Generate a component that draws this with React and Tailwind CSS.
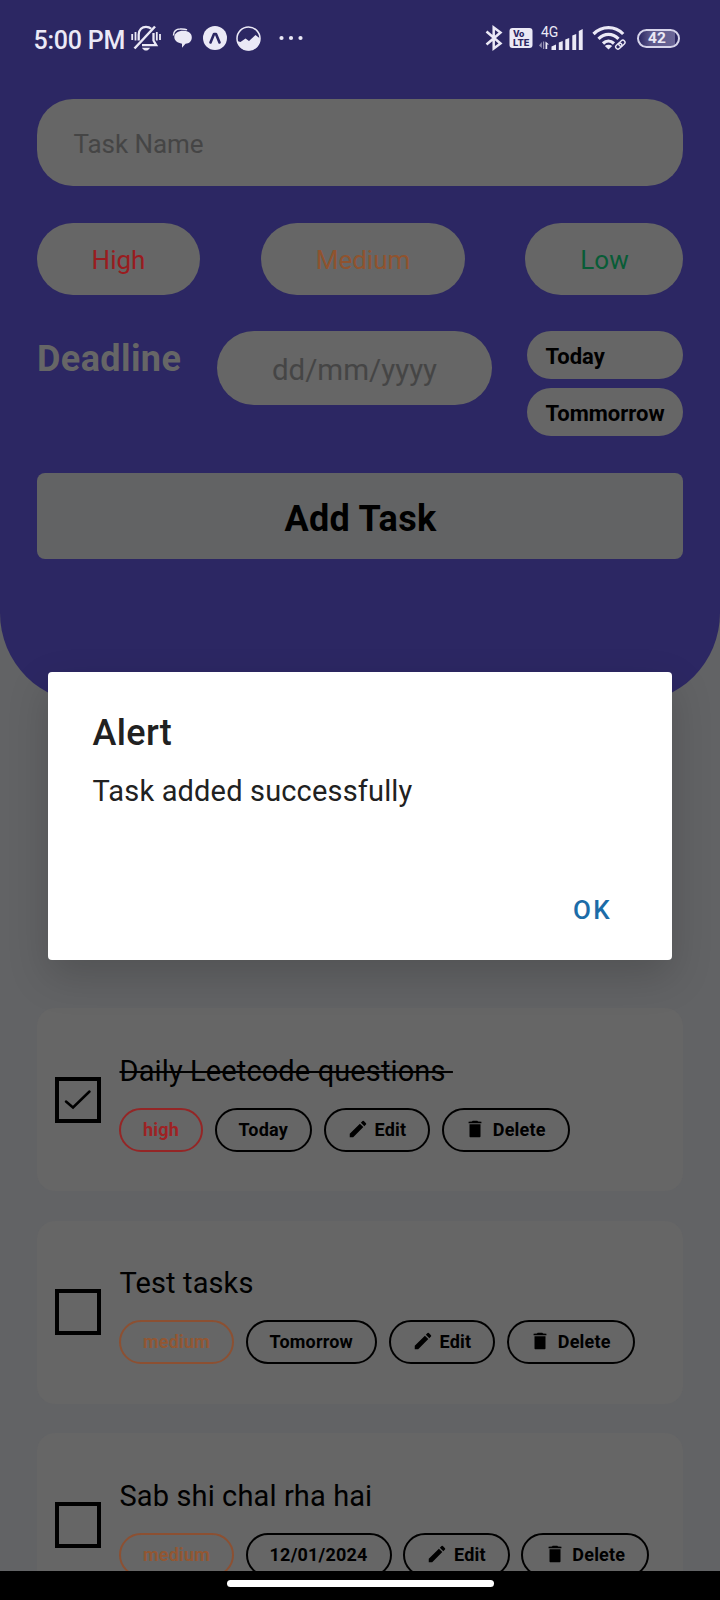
import React from "react";

const TASKS = [
  { title: "Daily Leetcode questions ", done: true, priority: "high", due: "Today" },
  { title: "Test tasks", done: false, priority: "medium", due: "Tomorrow" },
  { title: "Sab shi chal rha hai", done: false, priority: "medium", due: "12/01/2024" },
];

const PILL =
  "flex h-[44px] items-center rounded-full border-2 px-[22px] text-[18px] leading-none font-bold tracking-[0.2px] whitespace-pre";

function BellOff() {
  return (
    <svg className="ml-[6px] h-[26px] w-[30px] shrink-0" viewBox="0 0 30 26" fill="none" stroke="currentColor">
      <path d="M3.500 23.500 24 1.500" strokeWidth="2.500" />
      <path d="M7.700 15.500V9.500C8 4.800 11 1.800 15 1.800c2.300 0 4 .8 5.200 2" strokeWidth="2.300" />
      <path d="M22.500 8v7.500l2.700 4.700H11" strokeWidth="2.300" />
      <path d="M11 22.700h8c-1 1.900-2.300 2.800-4 2.800s-3-.9-4-2.800z" fill="currentColor" stroke="none" />
      <path d="M1.200 9v6M4.500 7v8.500M25.800 7v8.500M29 9v6" strokeWidth="1.800" />
    </svg>
  );
}

function Chat() {
  return (
    <svg className="ml-[11px] h-[20px] w-[21px] shrink-0" viewBox="0 0 21 20">
      <path d="M1.500 7.500C1.300 3 4.500 1 8 1c3.500-.1 5.500 0 7 .8" fill="none" stroke="currentColor" strokeWidth="1.500" />
      <path d="M11.300 2.700c5 0 8.500 2.600 8.500 6.500s-2.600 6.400-6.300 6.500L10 19.700v-4c-4.300-.6-7.700-3-7.700-6.600 0-3.800 3.900-6.400 9-6.400z" fill="currentColor" />
    </svg>
  );
}

function StatusBar() {
  return (
    <div className="flex h-[76px] items-center pl-[33.500px] text-[#ebe9f6]">
      <span className="w-[91.500px] shrink-0 translate-y-[1.500px] text-[25px] leading-none font-medium whitespace-nowrap tracking-[-0.25px]">5:00 PM</span>
      <BellOff />
      <Chat />
      <svg className="ml-[10px] size-[24px] shrink-0" viewBox="0 0 24 24">
        <circle cx="12" cy="12" r="12" fill="currentColor" />
        <path d="M7.500 16.500 11 8h2l3.500 8.500" fill="none" stroke="#2c2763" strokeWidth="2.600" strokeLinecap="round" strokeLinejoin="round" />
      </svg>
      <svg className="ml-[9px] size-[25px] shrink-0" viewBox="0 0 25 25">
        <circle cx="12.500" cy="12.500" r="11.500" fill="none" stroke="currentColor" strokeWidth="1.500" />
        <path d="M1 15 4.500 16 9.500 12.500 13 15 19.500 9 24 12.500a11.600 11.600 0 0 1-23 2.500z" fill="currentColor" />
      </svg>
      <svg className="ml-[18px] h-[6px] w-[24px] shrink-0" viewBox="0 0 24 6" fill="currentColor">
        <circle cx="2.500" cy="3" r="2.100" />
        <circle cx="12" cy="3" r="2.100" />
        <circle cx="21.500" cy="3" r="2.100" />
      </svg>

      <svg className="ml-[182px] h-[26px] w-[18px] shrink-0" viewBox="0 0 18 26" fill="none" stroke="currentColor" strokeWidth="2.500">
        <path d="M1.500 6.500 15.500 18.500 8.700 23.500V2.500L15.500 7.500 1.500 19.500" />
      </svg>
      <svg className="ml-[6px] h-[20px] w-[24px] shrink-0" viewBox="0 0 24 20">
        <rect x=".5" y="0" width="23" height="20" rx="3" fill="currentColor" />
        <g fill="#2c2763" fontFamily="Inter" fontWeight="800">
          <text x="4" y="9" fontSize="8.500" textLength="11.500" lengthAdjust="spacingAndGlyphs">Vo</text>
          <text x="4" y="17.500" fontSize="8.500" textLength="16.500" lengthAdjust="spacingAndGlyphs">LTE</text>
        </g>
      </svg>
      <svg className="ml-[5px] h-[34px] w-[46px] shrink-0 overflow-visible" viewBox="0 0 46 34" fill="currentColor">
        <text x="3" y="15.500" fontFamily="Roboto" fontSize="14">4G</text>
        <g transform="translate(0 5)">
          <path d="M1 19.500 3.800 16v6zM5 15.500h1.200V23H5z" opacity=".55" />
          <path d="M7.500 15.500 11 18.500H9.200V23H7.500z" />
          <path d="M13.500 20.500 18 18.500V24h-4.500zM20.800 16.500 24.700 15v9h-3.900zM27.300 13.500 31.200 12v12h-3.900zM34.300 9.500 38.200 8v16h-3.900zM40.800 5l3.900-2v21h-3.900z" />
        </g>
      </svg>
      <svg className="ml-[8px] h-[24px] w-[35px] shrink-0" viewBox="0 0 35 24" fill="none" stroke="currentColor">
        <path d="M1.500 8C10-.5 23-.5 31.200 8M6.500 12.800c6-5.800 14-5.800 20 0M11 17.500c3.300-3.300 7.500-3.300 11 0" strokeWidth="3.200" />
        <path d="M16.500 23.500 12.800 20c2.200-1.800 5.200-1.800 7.400 0z" fill="currentColor" stroke="none" />
        <g strokeWidth="1.400" transform="rotate(-42 28.500 18.500)">
          <rect x="22.800" y="16.300" width="6.800" height="4.400" rx="2.200" />
          <rect x="27" y="16.300" width="6.800" height="4.400" rx="2.200" />
        </g>
      </svg>
      <div className="ml-[10px] flex h-[19px] w-[43px] shrink-0 items-center rounded-full border-2 border-[#d6d4ea] bg-[linear-gradient(90deg,#2c2763_0%,#5d588b_30%,#6a6596_92%,#2c2763_93%)] pl-[9px] text-[15.500px] leading-none font-bold">
        <span className="translate-y-px">42</span>
      </div>
    </div>
  );
}

function TaskCard({ task }) {
  const color = task.priority === "high" ? "border-[#942626] text-[#9e2224]" : "border-[#8c5032] text-[#925733]";
  return (
    <div className="flex h-[183px] shrink-0 items-center rounded-[18px] bg-[#666666] pl-[18px]">
      <div className="flex size-[46px] shrink-0 items-center justify-center border-4 border-black">
        {task.done && (
          <svg className="size-[30px]" viewBox="0 0 30 30" fill="none" stroke="#000" strokeWidth="2.500" strokeLinecap="round" strokeLinejoin="miter">
            <path d="M3 16.500 10 22.500 26.500 6.500" />
          </svg>
        )}
      </div>
      <div className="ml-[18px] flex flex-col pt-[4px]">
        <div className={"ml-[0.500px] h-[38px] text-[29px] leading-[38px] tracking-[0.120px] whitespace-pre text-black " + (task.done ? "line-through decoration-2" : "")}>
          {task.title}
        </div>
        <div className="mt-[18px] flex gap-[11.500px]">
          <span className={PILL + " " + color}>{task.priority}</span>
          <span className={PILL + " border-black text-black"}>{task.due}</span>
          <span className={PILL + " border-black text-black"}>
            <svg className="mr-[6px] -ml-px size-[22px] -translate-y-px" viewBox="0 0 24 24">
              <path d="M3 17.250V21h3.750L17.810 9.940l-3.750-3.750L3 17.250zM20.710 7.040a1 1 0 0 0 0-1.410l-2.340-2.340a1 1 0 0 0-1.410 0l-1.830 1.830 3.750 3.750 1.830-1.830z" />
            </svg>
            Edit
          </span>
          <span className={PILL + " border-black text-black"}>
            <svg className="mr-[6.500px] ml-[-1.500px] size-[22px] -translate-y-px" viewBox="0 0 24 24">
              <path d="M6 19.800c0 .7.500 1.200 1.200 1.200h9.600c.7 0 1.200-.5 1.200-1.200V6.800H6v13zM19 4.200l-3.700-.4L14.500 3h-5l-.8.800L5 4.200V5.800h14V4.200z" />
            </svg>
            Delete
          </span>
        </div>
      </div>
    </div>
  );
}

export default function App() {
  return (
    <div className="relative flex h-[1600px] w-[720px] flex-col overflow-hidden bg-[#626365] font-['Roboto',sans-serif]">
      <header className="h-[703px] shrink-0 rounded-b-[90px] bg-[#2c2763]">
        <StatusBar />
        <div className="flex flex-col px-[37px] pt-[23px]">
          <div className="flex h-[87px] items-center rounded-[36px] bg-[#666666] pl-[36.500px] text-[26px] tracking-[-0.05px] text-[#454545]">
            <span className="translate-y-[1.500px]">Task Name</span>
          </div>
          <div className="mt-[37px] flex justify-between text-[26px]">
            <div className="flex h-[72px] w-[163px] items-center justify-center rounded-full bg-[#666666] text-[#991c1f]"><span className="translate-y-px">High</span></div>
            <div className="flex h-[72px] w-[204px] items-center justify-center rounded-full bg-[#666666] pl-px text-[#90532e]"><span className="translate-y-px">Medium</span></div>
            <div className="flex h-[72px] w-[158px] items-center justify-center rounded-full bg-[#666666] pl-px text-[#085c36]"><span className="translate-y-px">Low</span></div>
          </div>
          <div className="mt-[36px] flex items-start">
            <div className="w-[180px] text-[36px] leading-[56px] font-bold tracking-[0.400px] text-[#666666]">Deadline</div>
            <div className="flex h-[74px] w-[275px] items-center justify-center rounded-full bg-[#666666] text-[29.500px] text-[#454545]">
              <span className="translate-y-[2px]">dd/mm/yyyy</span>
            </div>
            <div className="ml-auto flex w-[156.500px] flex-col gap-[9px] text-[22px] leading-none font-bold text-black">
              <div className="flex h-[48px] items-center rounded-full bg-[#666666] pl-[19px]"><span className="translate-y-[2px]">Today</span></div>
              <div className="flex h-[48px] items-center rounded-full bg-[#666666] pl-[19px]"><span className="translate-y-[2px]">Tommorrow</span></div>
            </div>
          </div>
          <div className="mt-[37px] flex h-[86px] items-center justify-center rounded-[8px] bg-[#626364] pl-px text-[36px] font-bold tracking-[0.350px] text-black">
            <span className="translate-y-[3px]">Add Task</span>
          </div>
        </div>
      </header>

      <main className="flex h-[868px] shrink-0 flex-col gap-[29.700px] overflow-hidden px-[37px] pt-[305px]">
        {TASKS.map((task) => (
          <TaskCard key={task.title} task={task} />
        ))}
      </main>

      <footer className="flex h-[29px] shrink-0 justify-center bg-black pt-[9px]">
        <div className="h-[7px] w-[267px] rounded-full bg-white" />
      </footer>

      <div className="absolute top-[672px] left-[48px] flex h-[288px] w-[624px] flex-col rounded-[4px] bg-white px-[44.500px] shadow-[0_16px_40px_rgba(0,0,0,0.17)]">
        <h1 className="mt-[39px] text-[36px] leading-[44px] font-medium tracking-[0.350px] text-[#212121]">Alert</h1>
        <p className="mt-[17px] text-[29px] leading-[38px] tracking-[0.160px] text-[#212121]">Task added successfully</p>
        <div className="mt-auto mr-[15.500px] mb-[30px] self-end text-[26px] leading-[40px] font-medium tracking-[2.300px] text-[#1c6ca8]">OK</div>
      </div>
    </div>
  );
}
